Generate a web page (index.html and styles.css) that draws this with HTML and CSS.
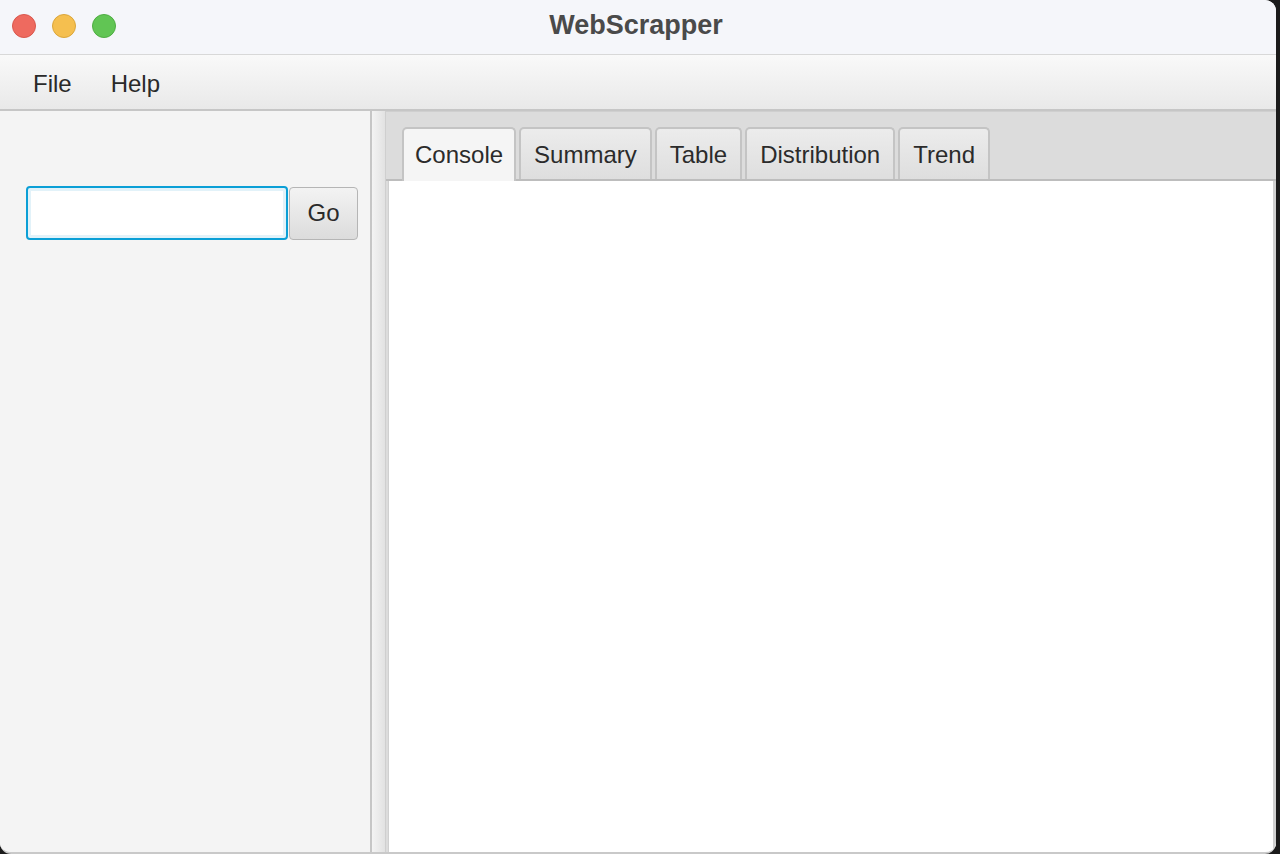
FILE: index.html
```html
<!DOCTYPE html>
<html>
<head>
<meta charset="utf-8">
<link rel="stylesheet" href="styles.css">
</head>
<body>
<div class="window">
  <div class="titlebar">
    <div class="lights">
      <span class="light red"></span>
      <span class="light yellow"></span>
      <span class="light green"></span>
    </div>
    <div class="title">WebScrapper</div>
  </div>
  <div class="menubar">
    <span class="menu">File</span>
    <span class="menu">Help</span>
  </div>
  <div class="main">
    <div class="left">
      <div class="search">
        <input class="field" type="text">
        <button class="go">Go</button>
      </div>
    </div>
    <div class="splitter"></div>
    <div class="tabpane">
      <div class="tabs">
        <div class="tab selected">Console</div>
        <div class="tab">Summary</div>
        <div class="tab">Table</div>
        <div class="tab">Distribution</div>
        <div class="tab">Trend</div>
      </div>
      <div class="content"></div>
    </div>
  </div>
</div>
</body>
</html>
```
FILE: styles.css
```css
html, body {
  margin: 0;
  padding: 0;
  height: 854px;
  overflow: hidden;
  background: #1b1b1b;
  font-family: "Liberation Sans", Arial, sans-serif;
}
.window {
  width: 1276px;
  height: 852px;
  border-top-right-radius: 11px;
  border-bottom-right-radius: 11px;
  border-bottom-left-radius: 11px;
  overflow: hidden;
  display: flex;
  flex-direction: column;
  background: #f4f4f4;
  border-bottom: 2px solid #c9c9c9;
}
.titlebar {
  flex: none;
  background: #f5f6fa;
  border-bottom: 1px solid #d8d8d8;
  display: flex;
  align-items: center;
  position: relative;
  padding-bottom: 2px;
  box-sizing: content-box;
  height: 52px;
}
.lights {
  display: flex;
  gap: 16px;
  padding-left: 12px;
}
.light {
  width: 24px;
  height: 24px;
  border-radius: 50%;
  box-sizing: border-box;
}
.red { background: #ee6a5f; border: 1px solid #d9574d; }
.yellow { background: #f5bf4f; border: 1px solid #dba63a; }
.green { background: #61c554; border: 1px solid #4ead42; }
.title {
  position: absolute;
  left: 0;
  right: 4px;
  top: 0;
  height: 54px;
  line-height: 50px;
  text-align: center;
  font-weight: bold;
  font-size: 27px;
  color: #4a4a4a;
  pointer-events: none;
}
.menubar {
  height: 56px;
  flex: none;
  background: linear-gradient(#f9f9f9, #e9e9e9);
  border-bottom: 2px solid #c6c6c6;
  display: flex;
  align-items: center;
  padding-left: 33px;
  padding-top: 3px;
  gap: 39px;
  font-size: 24px;
  color: #2a2a2a;
  box-sizing: border-box;
}
.main {
  flex: 1;
  display: flex;
  min-height: 0;
}
.left {
  width: 372px;
  flex: none;
  background: #f4f4f4;
  border-right: 2px solid #c6c6c6;
  box-sizing: border-box;
  padding: 75px 0 0 26px;
}
.search {
  display: flex;
  align-items: center;
  gap: 1px;
}
.field {
  width: 262px;
  height: 54px;
  box-sizing: border-box;
  border: 2px solid #0b9fd6;
  border-radius: 4px;
  box-shadow: inset 0 0 0 3px #e2f2f9;
  background: #fff;
  outline: none;
  margin: 0;
  font-size: 22px;
}
.go {
  width: 69px;
  height: 53px;
  box-sizing: border-box;
  border: 1px solid #b5b5b5;
  border-radius: 4px;
  background: linear-gradient(#f3f3f3, #dcdcdc);
  font-family: "Liberation Sans", Arial, sans-serif;
  font-size: 24px;
  color: #2a2a2a;
  margin: 0;
  padding: 0;
}
.splitter {
  width: 13px;
  flex: none;
  background: linear-gradient(90deg, #f3f3f3, #e2e2e2);
  border-right: 1px solid #cfcfcf;
}
.tabpane {
  flex: 1;
  display: flex;
  flex-direction: column;
  background: #dcdcdc;
}
.tabs {
  height: 70px;
  flex: none;
  display: flex;
  align-items: flex-end;
  gap: 3px;
  padding-left: 16px;
  box-sizing: border-box;
  border-bottom: 2px solid #bdbdbd;
  border-top: 1px solid #cfcfcf;
}
.tab {
  height: 52px;
  box-sizing: border-box;
  padding: 0 13px;
  border: 2px solid #c4c4c4;
  border-bottom: none;
  border-radius: 5px 5px 0 0;
  background: linear-gradient(#ececec, #dedede);
  font-size: 24px;
  color: #2b2b2b;
  line-height: 52px;
}
.tab.selected {
  background: #f5f5f5;
  margin-bottom: -2px;
  height: 54px;
  padding: 0 11px;
}
.content {
  flex: 1;
  background: #fff;
  margin: 0 0 0 2px;
  border-left: 1px solid #d0d0d0;
  border-right: 3px solid #cfcfcf;
}
```
